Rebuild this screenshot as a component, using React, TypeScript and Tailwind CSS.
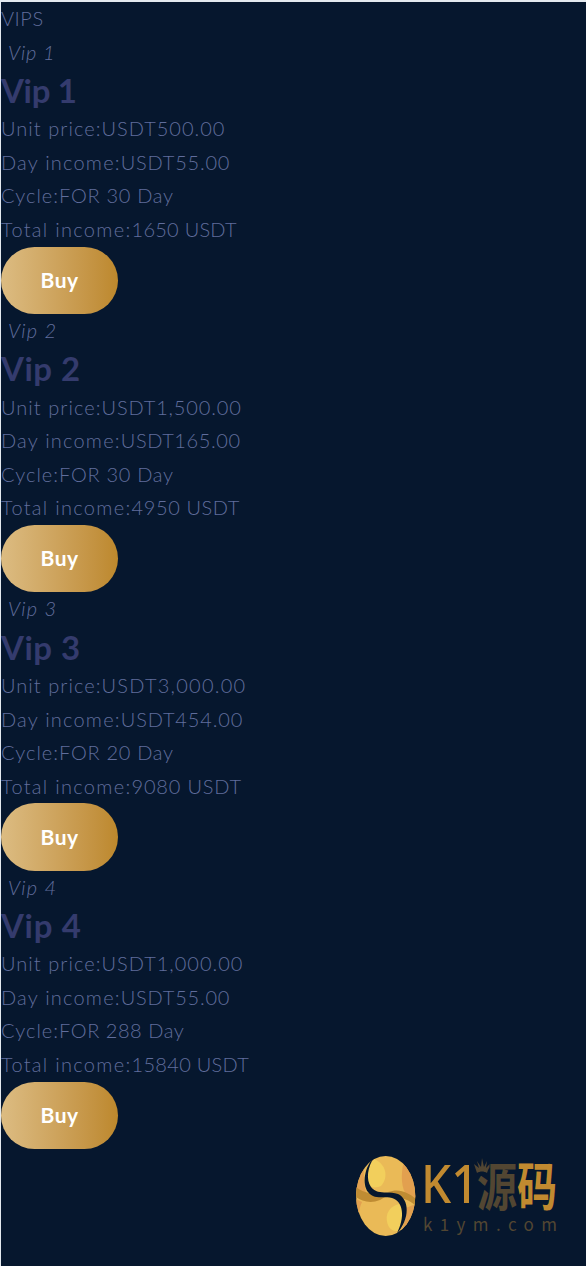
import React from 'react';

const vips = [
  {
    name: 'Vip 1',
    title: 'tracking-[-0.3px]',
    tag: 'tracking-[0.8px]',
    rows: [
      { label: 'Unit price:', value: 'USDT500.00', l: 'tracking-[1.05px]', v: 'tracking-[1px]' },
      { label: 'Day income:', value: 'USDT55.00', l: 'tracking-[1.2px]', v: 'tracking-[0.8px]' },
      { label: 'Cycle:', value: 'FOR 30 Day', l: 'tracking-[1px]', v: 'tracking-[0.7px]' },
      { label: 'Total income:', value: '1650 USDT', l: 'tracking-[1.3px]', v: 'tracking-[0.25px]' },
    ],
  },
  {
    name: 'Vip 2',
    title: 'tracking-[0.5px]',
    tag: 'tracking-[1.2px]',
    rows: [
      { label: 'Unit price:', value: 'USDT1,500.00', l: 'tracking-[1.05px]', v: 'tracking-[0.85px]' },
      { label: 'Day income:', value: 'USDT165.00', l: 'tracking-[1.2px]', v: 'tracking-[0.6px]' },
      { label: 'Cycle:', value: 'FOR 30 Day', l: 'tracking-[1px]', v: 'tracking-[0.7px]' },
      { label: 'Total income:', value: '4950 USDT', l: 'tracking-[1.3px]', v: 'tracking-[0.6px]' },
    ],
  },
  {
    name: 'Vip 3',
    title: 'tracking-[0.5px]',
    tag: 'tracking-[1.2px]',
    rows: [
      { label: 'Unit price:', value: 'USDT3,000.00', l: 'tracking-[1.05px]', v: 'tracking-[1.25px]' },
      { label: 'Day income:', value: 'USDT454.00', l: 'tracking-[1.2px]', v: 'tracking-[0.85px]' },
      { label: 'Cycle:', value: 'FOR 20 Day', l: 'tracking-[1px]', v: 'tracking-[0.7px]' },
      { label: 'Total income:', value: '9080 USDT', l: 'tracking-[1.3px]', v: 'tracking-[0.8px]' },
    ],
  },
  {
    name: 'Vip 4',
    title: 'tracking-[0.7px]',
    tag: 'tracking-[1.2px]',
    rows: [
      { label: 'Unit price:', value: 'USDT1,000.00', l: 'tracking-[1.05px]', v: 'tracking-[1px]' },
      { label: 'Day income:', value: 'USDT55.00', l: 'tracking-[1.2px]', v: 'tracking-[0.8px]' },
      { label: 'Cycle:', value: 'FOR 288 Day', l: 'tracking-[1px]', v: 'tracking-[0.55px]' },
      { label: 'Total income:', value: '15840 USDT', l: 'tracking-[1.3px]', v: 'tracking-[0.3px]' },
    ],
  },
];

function Logo() {
  return (
    <svg className="absolute left-[350px] top-[1130px]" width="216" height="120" viewBox="0 -20 216 120">
      <defs>
        <clipPath id="egg">
          <ellipse cx="35.7" cy="46" rx="29.6" ry="40" />
        </clipPath>
      </defs>
      <g clipPath="url(#egg)">
        <rect width="70" height="92" fill="#eaba57" />
        <path d="M0 0H18C12 16 13 32 17 46L0 44Z" fill="#e2a04f" />
        <path d="M70 0H57C51 18 50 32 55 43L70 52Z" fill="#e2a04f" />
        <path d="M0 46L12 52C8 60 8 72 13 82L0 92Z" fill="#e2a04f" />
        <path d="M56 58L70 52V80H51C55 72 57 66 56 58Z" fill="#e2a04f" />
        <path d="M24 9C36 14 39 27 31 36C27 38 22 38 19 35C15 26 18 16 24 9Z" fill="#f2cf5c" />
        <path d="M49 54C37 57 34 68 39 77C42 81 46 82 49 80C54 71 54 60 49 54Z" fill="#f2cf5c" />
        <path d="M6 37C14 44 25 43 35 47L30 50C20 54 12 51 6 47Z" fill="#bf8c33" />
        <path d="M38 42C49 38 58 42 66 49V56C59 49 52 49 46 45Z" fill="#bf8c33" />
        <path
          d="M25 6C14 17 12 34 18 42C24 50 33 46 42 48C53 51 56 67 46 85C61 68 59 49 48 44C38 40 28 46 21 37C16 30 17 17 25 6Z"
          fill="#06172e"
        />
      </g>
      <text transform="translate(71 53) scale(.9 1)" fill="#c18a30" fontSize="53" className="font-['Noto_Sans',sans-serif] font-medium">K1</text>
      <text transform="translate(127 56) scale(.77 1)" fontSize="52" className="font-['Noto_Sans_CJK_SC',sans-serif] font-bold">
        <tspan fill="#524632">源</tspan>
        <tspan fill="#c18a30">码</tspan>
      </text>
      {/* crown sits in place of the first dot */}
      <path d="M123 7H138V25H123Z" fill="#06172e" />
      <path d="M127 23L124 14L129 18L127 11L131 17L132 8L134 17L137 11L136 18L140 14L137 23C134 21 130 21 127 23Z" fill="#524632" />
      <text x="73" y="81" fill="#524632" fontSize="17" textLength="134" className="font-['Noto_Sans_CJK_SC',sans-serif] font-normal">k1ym.com</text>
    </svg>
  );
}

export default function App() {
  return (
    <div className="relative h-[1266px] w-[586px] overflow-hidden border-l border-t-2 border-[#e3e9ef] bg-[#06172e] font-['Lato',sans-serif] text-[20px] leading-[33.6px] font-light text-[#606d9c]">
      <div className="h-[33.5px] tracking-[0.5px]">VIPS</div>
      {vips.map((vip) => (
        <div key={vip.name}>
          <div className="pl-[7px] italic">
            <span className={vip.tag}>{vip.name}</span>
          </div>
          <h3 className="text-[33px] leading-[43.1px] font-bold text-[#343b6d]">
            <span className={vip.title}>{vip.name}</span>
          </h3>
          {vip.rows.map((row) => (
            <div key={row.label}>
              <span className={row.l}>{row.label}</span>
              <span className={row.v}>{row.value}</span>
            </div>
          ))}
          <button className="block h-[67.3px] w-[117px] rounded-full bg-gradient-to-r from-[#dcbc82] to-[#bd882c] pb-px text-[21px] font-bold tracking-[0.4px] text-white">
            Buy
          </button>
        </div>
      ))}
      <div className="absolute -top-[2px] -left-px">
        <Logo />
      </div>
    </div>
  );
}
